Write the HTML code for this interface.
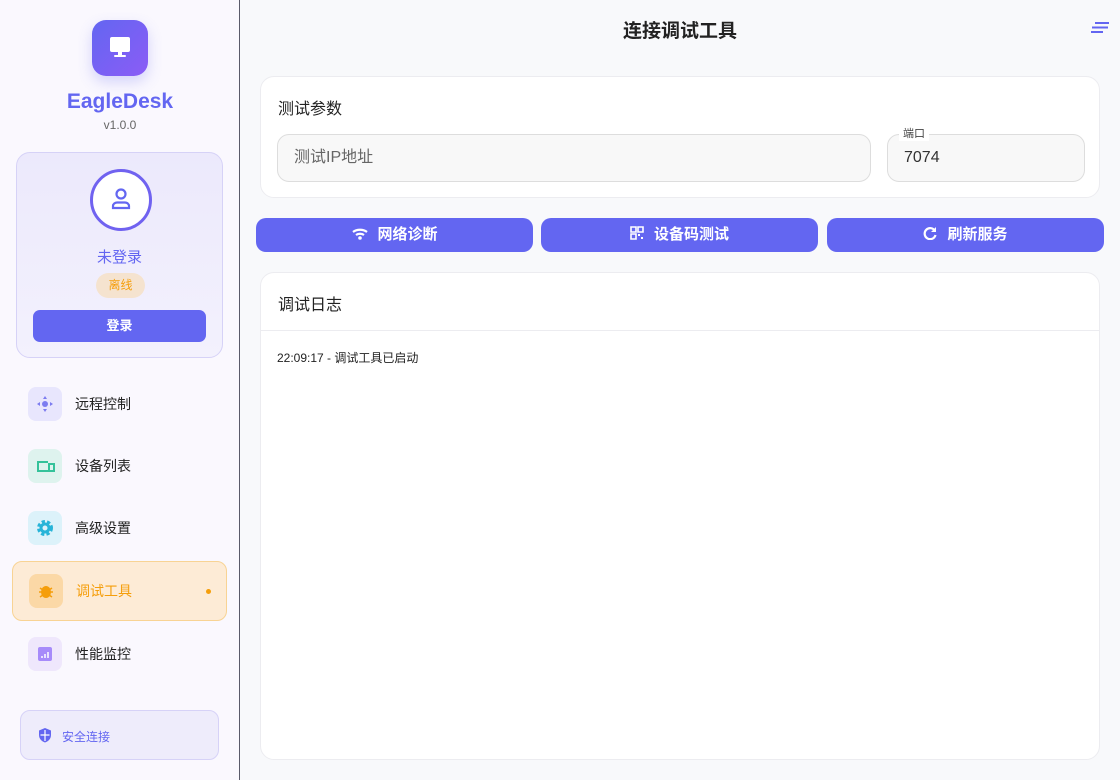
<!DOCTYPE html>
<html><head><meta charset="utf-8"><style>
*{box-sizing:border-box;margin:0;padding:0}
body{width:1120px;height:780px;overflow:hidden;font-family:"Liberation Sans","Noto Sans CJK SC",sans-serif;background:#f8f9fb;position:relative}
.side{position:absolute;left:0;top:0;width:240px;height:780px;background:#faf8fe;border-right:1px solid #5a5a6a}
.logo{position:absolute;left:92px;top:20px;width:56px;height:56px;border-radius:14px;background:linear-gradient(135deg,#6366f1,#8b5cf6);box-shadow:0 6px 14px rgba(99,102,241,.25)}
.brand{position:absolute;left:0;width:240px;text-align:center;top:90px;font-size:21px;font-weight:bold;color:#6366f1}
.ver{position:absolute;left:0;width:240px;text-align:center;top:118px;font-size:12px;color:#666}
.card{position:absolute;left:16px;top:152px;width:207px;height:206px;border:1px solid #d6d2f7;border-radius:14px;background:linear-gradient(180deg,#ece9fc,#f3f1fd)}
.avatar{position:absolute;left:73px;top:16px;width:62px;height:62px;border-radius:50%;border:3px solid #7062f0;background:#fff}
.name{position:absolute;left:0;width:100%;top:93px;text-align:center;font-size:15px;color:#6366f1}
.badge{position:absolute;left:79px;top:120px;width:49px;height:25px;border-radius:13px;background:#f5e3cf;color:#f59e0b;font-size:12px;text-align:center;line-height:25px}
.login{position:absolute;left:16px;top:157px;width:173px;height:32px;border-radius:7px;background:#6366f1;color:#fff;font-weight:bold;font-size:13px;text-align:center;line-height:32px}
.nav{position:absolute;left:12px;width:215px;height:60px;font-size:14px;color:#222}
.nav .ic{position:absolute;left:16px;top:13px;width:34px;height:34px;border-radius:8px}
.nav span.t{position:absolute;left:63px;top:20px}
.act{background:#fdebd6;border:1px solid #f8d394;border-radius:10px}
.sec{position:absolute;left:20px;top:710px;width:199px;height:50px;border:1px solid #d6d2f7;border-radius:10px;background:#eeecfb;font-size:12px;color:#6366f1}
.title{position:absolute;left:240px;width:880px;top:16px;text-align:center;font-size:19px;font-weight:bold;color:#222}
.panel{position:absolute;left:260px;width:840px;background:#fff;border:1px solid #ececf0;border-radius:14px}
.h{position:absolute;left:17px;font-size:16px;color:#222}
.inp{position:absolute;top:57px;height:48px;border:1px solid #ddd;border-radius:12px;background:#f8f8f8;font-size:16px;line-height:46px;padding-left:16px}
.btn{position:absolute;top:218px;height:34px;width:277px;border-radius:10px;background:#6366f1;color:#fff;font-weight:bold;font-size:15px;text-align:center;line-height:34px}
</style></head><body>
<div class="side">
<div class="logo"><svg width="56" height="56"><rect x="18" y="17" width="20" height="15" rx="2" fill="#fff"/><rect x="26" y="32" width="4" height="3" fill="#fff"/><rect x="22" y="35" width="12" height="2" rx="1" fill="#fff"/></svg></div>
<div class="brand">EagleDesk</div><div class="ver">v1.0.0</div>
<div class="card"><div class="avatar"><svg width="56" height="56"><circle cx="28" cy="22" r="4.5" fill="none" stroke="#6366f1" stroke-width="2.2"/><path d="M20 36v-2a4 3.5 0 0 1 4-3.5h8a4 3.5 0 0 1 4 3.5v2z" fill="none" stroke="#6366f1" stroke-width="2.2"/></svg></div>
<div class="name">未登录</div><div class="badge">离线</div><div class="login">登录</div></div>
<div class="nav" style="top:374px"><div class="ic" style="background:#e8e6fd"><svg width="34" height="34"><circle cx="17" cy="17" r="3" fill="#7c7cf0"/><path d="M17 9l-2 3h4zM17 25l-2-3h4zM9 17l3-2v4zM25 17l-3-2v4z" fill="#7c7cf0"/></svg></div><span class="t">远程控制</span></div>
<div class="nav" style="top:436px"><div class="ic" style="background:#def3ee"><svg width="34" height="34"><path d="M10 22V13h10M9 22h11" fill="none" stroke="#34c29a" stroke-width="2"/><rect x="21" y="15" width="5" height="7" fill="none" stroke="#34c29a" stroke-width="2"/></svg></div><span class="t">设备列表</span></div>
<div class="nav" style="top:498px"><div class="ic" style="background:#dcf2fa"><svg width="34" height="34"><circle cx="17" cy="17" r="6" fill="none" stroke="#27b4d8" stroke-width="4" stroke-dasharray="3 2"/><circle cx="17" cy="17" r="4" fill="none" stroke="#27b4d8" stroke-width="3"/></svg></div><span class="t">高级设置</span></div>
<div class="nav act" style="top:561px"><div class="ic" style="background:#fbd8a6;left:16px;top:12px"><svg width="34" height="34"><ellipse cx="17" cy="18" rx="5" ry="6" fill="#f59e0b"/><path d="M11 14l3 2M23 14l-3 2M10 18h4M24 18h-4M11 23l3-2M23 23l-3-2" stroke="#f59e0b" stroke-width="1.5"/></svg></div><span class="t" style="color:#f59e0b;top:19px">调试工具</span><div style="position:absolute;left:193px;top:27px;width:5px;height:5px;border-radius:50%;background:#f59e0b"></div></div>
<div class="nav" style="top:624px"><div class="ic" style="background:#efe7fc"><svg width="34" height="34"><rect x="10" y="10" width="14" height="14" rx="2" fill="#a78bfa"/><path d="M14 21v-2M17 21v-4M20 21v-6" stroke="#fff" stroke-width="1.5"/></svg></div><span class="t">性能监控</span></div>
<div class="sec"><svg style="position:absolute;left:17px;top:16px" width="14" height="16"><path d="M7 1l6 2.5v4.5c0 4-3 6.5-6 7.5-3-1-6-3.5-6-7.5V3.5z" fill="#6366f1"/><path d="M7 3v11M2.5 8h9" stroke="#fff" stroke-width="1.2"/></svg><span style="position:absolute;left:41px;top:17px">安全连接</span></div>
</div>
<div class="title">连接调试工具</div>
<svg style="position:absolute;left:1090px;top:22px" width="20" height="12"><path d="M5 1h14M2 5.5h16M1 10h12" stroke="#6366f1" stroke-width="2"/></svg>
<div class="panel" style="top:76px;height:122px"><div class="h" style="top:18px">测试参数</div>
<div class="inp" style="left:16px;width:594px;color:#666">测试IP地址</div>
<div class="inp" style="left:626px;width:198px;color:#333">7074</div>
<div style="position:absolute;left:638px;top:50px;background:#fff;padding:0 4px;font-size:11px;color:#444;line-height:14px">端口</div></div>
<div class="btn" style="left:256px"><svg width="18" height="14" style="vertical-align:-1px;margin-right:8px"><path d="M2 6a10 8 0 0 1 14 0M5 9a6 5 0 0 1 8 0" fill="none" stroke="#fff" stroke-width="2.2"/><circle cx="9" cy="12" r="1.8" fill="#fff"/></svg>网络诊断</div>
<div class="btn" style="left:541px"><svg width="14" height="14" style="vertical-align:-1px;margin-right:10px"><path d="M1 1h5v5H1zM8 1h5v5H8zM1 8h5v5H1z" fill="none" stroke="#fff" stroke-width="1.6"/><path d="M8 8h2v2H8zM11 11h2v2h-2z" fill="#fff"/></svg>设备码测试</div>
<div class="btn" style="left:827px"><svg width="14" height="14" style="vertical-align:-1px;margin-right:10px"><path d="M12 5A5.5 5.5 0 1 0 12.5 9" fill="none" stroke="#fff" stroke-width="2.2"/><path d="M13 1v5H8z" fill="#fff"/></svg>刷新服务</div>
<div class="panel" style="top:272px;height:488px"><div class="h" style="top:18px">调试日志</div>
<div style="position:absolute;left:0;right:0;top:57px;border-top:1px solid #ececf0"></div>
<div style="position:absolute;left:16px;top:76px;font-size:12px;color:#222">22:09:17 - 调试工具已启动</div></div>
</body></html>
